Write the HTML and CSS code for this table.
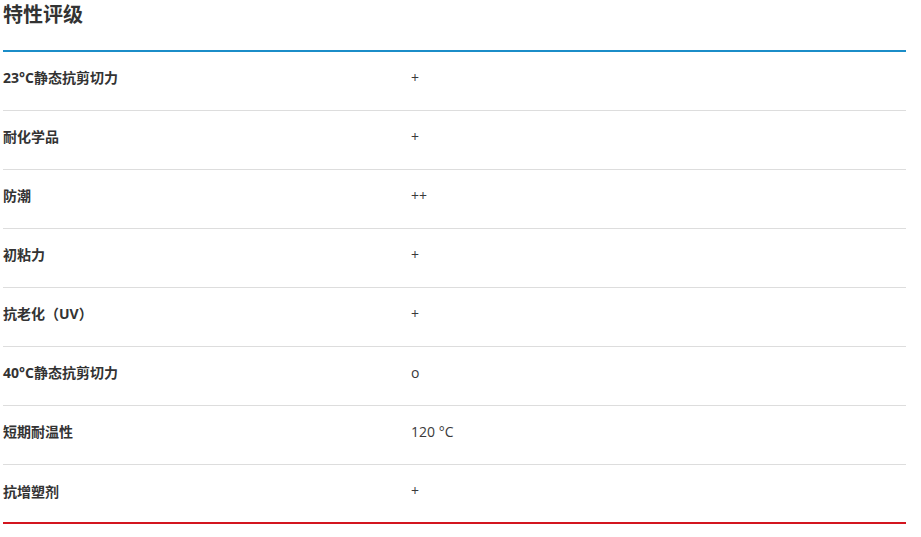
FILE: index.html
```html
<!DOCTYPE html>
<html lang="zh-CN">
<head>
<meta charset="utf-8">
<title>特性评级</title>
<link rel="stylesheet" href="styles.css">
</head>
<body>
<section class="ratings">
  <h2 class="ratings-title">特性评级</h2>
  <div class="ratings-table">
    <div class="row"><div class="label">23°C静态抗剪切力</div><div class="value">+</div></div>
    <div class="row"><div class="label">耐化学品</div><div class="value">+</div></div>
    <div class="row"><div class="label">防潮</div><div class="value">++</div></div>
    <div class="row"><div class="label">初粘力</div><div class="value">+</div></div>
    <div class="row"><div class="label">抗老化（UV）</div><div class="value">+</div></div>
    <div class="row"><div class="label">40°C静态抗剪切力</div><div class="value">o</div></div>
    <div class="row"><div class="label">短期耐温性</div><div class="value">120 °C</div></div>
    <div class="row"><div class="label">抗增塑剂</div><div class="value">+</div></div>
  </div>
</section>
</body>
</html>
```
FILE: styles.css
```css
html, body {
  margin: 0;
  padding: 0;
  background: #ffffff;
}
body {
  font-family: "Open Sans", "Noto Sans CJK SC", sans-serif;
  color: #333333;
}
.ratings {
  width: 903px;
  margin-left: 3px;
}
.ratings-title {
  margin: 0;
  font-size: 20px;
  line-height: 30px;
  font-weight: 700;
  color: #333333;
  height: 50px;
}
.ratings-table {
  border-top: 2px solid #1b8dc8;
  border-bottom: 2px solid #d3151f;
}
.row {
  display: grid;
  grid-template-columns: 408px 1fr;
  align-items: center;
  box-sizing: border-box;
  height: 59px;
  padding-bottom: 8px;
  border-bottom: 1px solid #dddddd;
  font-size: 14px;
}
.row:last-child {
  border-bottom: none;
  height: 57px;
  padding-bottom: 6px;
}
.label {
  font-weight: 700;
}
.value {
  font-weight: 400;
  color: #3a3a3a;
}
```
